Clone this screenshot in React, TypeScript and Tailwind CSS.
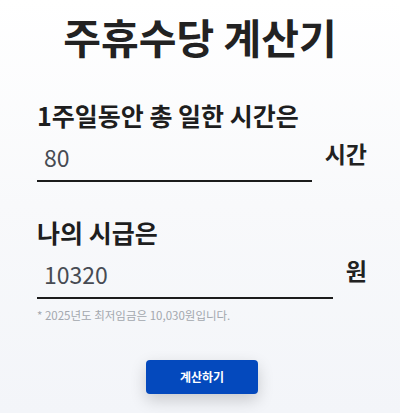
import React, { useState } from "react";

const FONT = "font-['Noto_Sans_CJK_KR','Noto_Sans',sans-serif]";

type FieldProps = {
  label: string;
  unit: string;
  value: string;
  onChange: (v: string) => void;
  labelGap: string;
};

const Field: React.FC<FieldProps> = ({ label, unit, value, onChange, labelGap }) => {
  return (
    <div className={labelGap}>
      <label className="block text-[25px] leading-[32px] font-bold text-[#1e1e1e]">
        {label}
      </label>
      <div className="mt-[5px] flex items-center gap-[13px]">
        <input
          type="text"
          inputMode="numeric"
          value={value}
          onChange={(e) => onChange(e.target.value.replace(/[^0-9]/g, ""))}
          className="h-[44px] min-w-0 flex-1 border-b-2 border-[#1c1c1c] bg-transparent pb-[4px] pl-[7px] text-[23px] text-[#474b53] outline-none"
        />
        <span className="pb-[14px] text-[23px] font-bold text-[#222]">{unit}</span>
      </div>
    </div>
  );
};

export default function App() {
  const [hours, setHours] = useState<string>("80");
  const [wage, setWage] = useState<string>("10320");
  const [result, setResult] = useState<number | null>(null);

  const calculate = () => {
    const h = Number(hours) / 4;
    const w = Number(wage);
    if (!h || !w) return;
    // 주 15시간 이상일 때만, 40시간 상한
    setResult(h >= 15 ? Math.round((Math.min(h, 40) / 40) * 8 * w) : 0);
  };

  return (
    <div
      className={`${FONT} min-h-[413px] w-full bg-gradient-to-b from-white via-[#f8f9fb] to-[#f3f5f9]`}
    >
      <h1 className="pt-[12px] text-center text-[41px] leading-[48px] font-bold text-[#222]">
        주휴수당 계산기
      </h1>

      <div className="pl-[37px] pr-[33px]">
        <Field
          label="1주일동안 총 일한 시간은"
          unit="시간"
          value={hours}
          onChange={setHours}
          labelGap="mt-[39px]"
        />
        <Field
          label="나의 시급은"
          unit="원"
          value={wage}
          onChange={setWage}
          labelGap="mt-[31px]"
        />

        <p className="mt-[6px] text-[11.5px] leading-[16px] text-[#a3a7ae]">
          * 2025년도 최저임금은 10,030원입니다.
        </p>

        <div className="mt-[37px] flex justify-center">
          <button
            type="button"
            onClick={calculate}
            title={result === null ? undefined : `${result.toLocaleString()}원`}
            className="h-[34px] w-[112px] rounded-[4px] bg-[#0449bd] text-[12px] font-bold text-white shadow-[0_6px_16px_rgba(0,0,0,0.18)]"
          >
            계산하기
          </button>
        </div>
      </div>
    </div>
  );
}
